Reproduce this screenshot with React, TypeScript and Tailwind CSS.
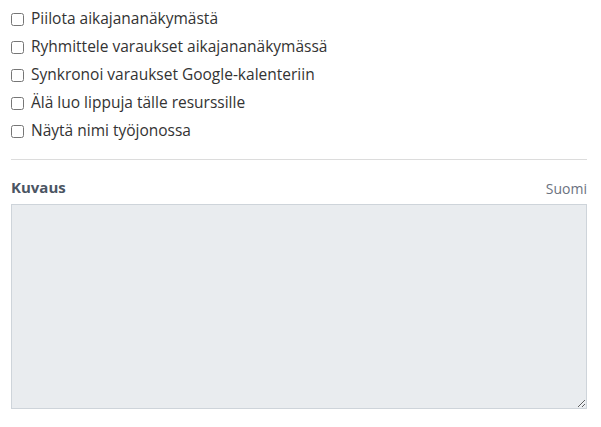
const options = [
  "Piilota aikajananäkymästä",
  "Ryhmittele varaukset aikajananäkymässä",
  "Synkronoi varaukset Google-kalenteriin",
  "Älä luo lippuja tälle resurssille",
  "Näytä nimi työjonossa",
];

export default function App() {
  return (
    <div className="w-[601px] h-[427px] bg-white pl-[11px] pr-[14px] pt-[5px] font-['Open_Sans',sans-serif] text-[#333]">
      <div className="flex flex-col">
        {options.map((label) => (
          <label key={label} className="flex items-center h-[28px] text-[15.5px]">
            <input type="checkbox" className="w-[13px] h-[13px] m-0 mr-[7px] accent-[#333]" />
            <span>{label}</span>
          </label>
        ))}
      </div>
      <div className="mt-[14px] border-t border-[#dcdcdc]" />
      <div className="flex items-end justify-between mt-[16px] mb-[5px]">
        <span className="text-[15px] font-bold text-[#4b5563]">Kuvaus</span>
        <span className="text-[14px] text-[#6b7280]">Suomi</span>
      </div>
      <textarea className="block w-full h-[205px] bg-[#e9ecef] border border-[#ced4da] outline-none" />
    </div>
  );
}
